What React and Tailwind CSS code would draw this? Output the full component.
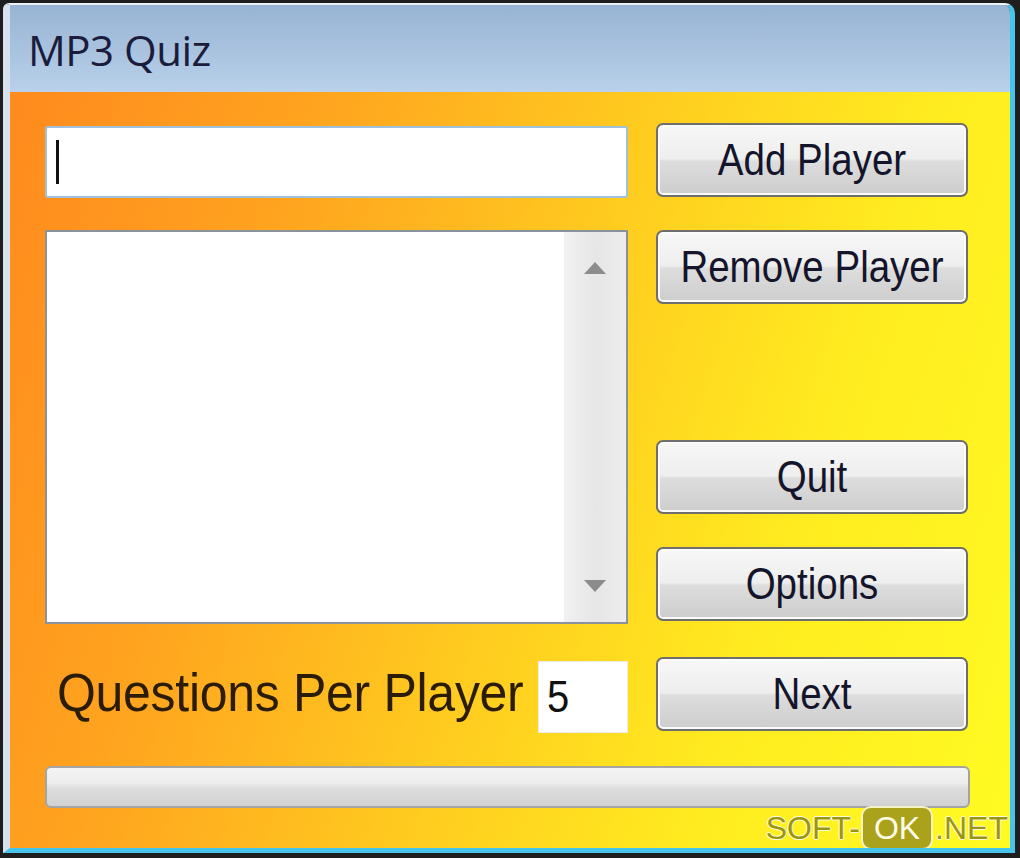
import React from "react";

const WinButton = ({ label, className = "" }) => (
  <button
    className={`w-[312px] h-[74px] rounded-[7px] border-2 border-[#6e6e6e] bg-[linear-gradient(#f7f7f7_0%,#eeeeee_48%,#dddddd_52%,#cdcdcd_100%)] shadow-[inset_0_0_0_2px_#fbfbfb] flex items-center justify-center text-[38.5px] text-[#14142a] font-['Liberation_Sans',Arial,sans-serif] ${className}`}
  >
    <span className="inline-block scale-y-115">{label}</span>
  </button>
);

const App = () => {
  return (
    <div className="w-[1020px] h-[858px] bg-[#1e1e1e] pl-[3px] pt-[3px] pr-[5px] pb-[5px] font-['Liberation_Sans',Arial,sans-serif]">
      <div className="relative w-full h-full flex flex-col rounded-tl-[6px] rounded-tr-[10px] overflow-hidden border-t-2 border-t-[#eef2f7] border-l-[7px] border-l-[#d6e2ee] border-r-[5px] border-r-[#46c4ea] border-b-[5px] border-b-[#46c4ea]">
        {/* Title bar */}
        <div className="h-[87px] shrink-0 bg-[linear-gradient(#98b4d4_0%,#a8c2de_50%,#b9d1ea_100%)] flex items-center pl-[18px] pt-[2px]">
          <span className="text-[42px] text-[#1b1b3c] font-['Open_Sans','Noto_Sans',sans-serif] tracking-[-0.5px]">
            MP3 Quiz
          </span>
        </div>

        {/* Client area */}
        <div className="flex-1 flex flex-col pl-[35px] pt-[31px] bg-[linear-gradient(108deg,#ff8a1e_0%,#ffa41f_25%,#ffc91f_50%,#ffec20_75%,#fffb22_100%)]">
          {/* Row 1 */}
          <div className="flex items-start gap-[28px]">
            <div className="mt-[3px] w-[583px] h-[72px] bg-white rounded-[3px] border-2 border-[#9fc2dc] flex items-center pl-[9px]">
              <div className="w-[3px] h-[44px] bg-[#111]" />
            </div>
            <WinButton label="Add Player" />
          </div>

          {/* Row 2 */}
          <div className="flex items-start gap-[28px] mt-[32px]">
            <div className="w-[583px] h-[394px] bg-white border-2 border-[#8a929c] flex justify-end">
              <div className="w-[62px] h-full bg-[linear-gradient(90deg,#f2f2f2,#e6e6e6_50%,#ededed)] flex flex-col items-center justify-between py-[30px]">
                <svg width="22" height="12" viewBox="0 0 22 12">
                  <polygon points="11,0 22,12 0,12" fill="#8c8c8c" />
                </svg>
                <svg width="22" height="12" viewBox="0 0 22 12">
                  <polygon points="0,0 22,0 11,12" fill="#8c8c8c" />
                </svg>
              </div>
            </div>
            <div className="flex flex-col">
              <WinButton label="Remove Player" />
              <WinButton label="Quit" className="mt-[136px]" />
              <WinButton label="Options" className="mt-[33px]" />
            </div>
          </div>

          {/* Row 3 */}
          <div className="flex items-start gap-[28px] mt-[33px]">
            <div className="w-[583px] h-[72px] flex items-center mt-[4px]">
              <span className="flex-1 pl-[12px] mb-[8px] leading-none text-[50px] text-[#2b1c05] inline-block scale-y-108 tracking-[-0.3px]">
                Questions Per Player
              </span>
              <div className="w-[90px] h-[72px] bg-white border border-[#ececec] flex items-center pl-[8px] text-[40px] text-[#111]">
                <span className="inline-block scale-y-110">5</span>
              </div>
            </div>
            <WinButton label="Next" />
          </div>

          {/* Progress bar */}
          <div className="mt-[33px] w-[925px] h-[42px] rounded-[6px] border-2 border-[#a4a4a4] bg-[linear-gradient(#f4f4f4_0%,#ececec_40%,#dcdcdc_55%,#d2d2d2_100%)]" />
        </div>

        {/* Watermark */}
        <div className="absolute right-[2px] bottom-[-4px] flex items-center text-[32px] text-[#9c960e] [text-shadow:1px_0_#fffce0,-1px_0_#fffce0,0_1px_#fffce0,0_-1px_#fffce0]">
          <span>SOFT-</span>
          <span className="ml-[1px] mr-[2px] px-[11px] h-[44px] flex items-center rounded-[10px] bg-[#aaa21a] border-2 border-[#f6f2c8] text-[#fffbe8] [text-shadow:none]">
            OK
          </span>
          <span>.NET</span>
        </div>
      </div>
    </div>
  );
};

export default App;
